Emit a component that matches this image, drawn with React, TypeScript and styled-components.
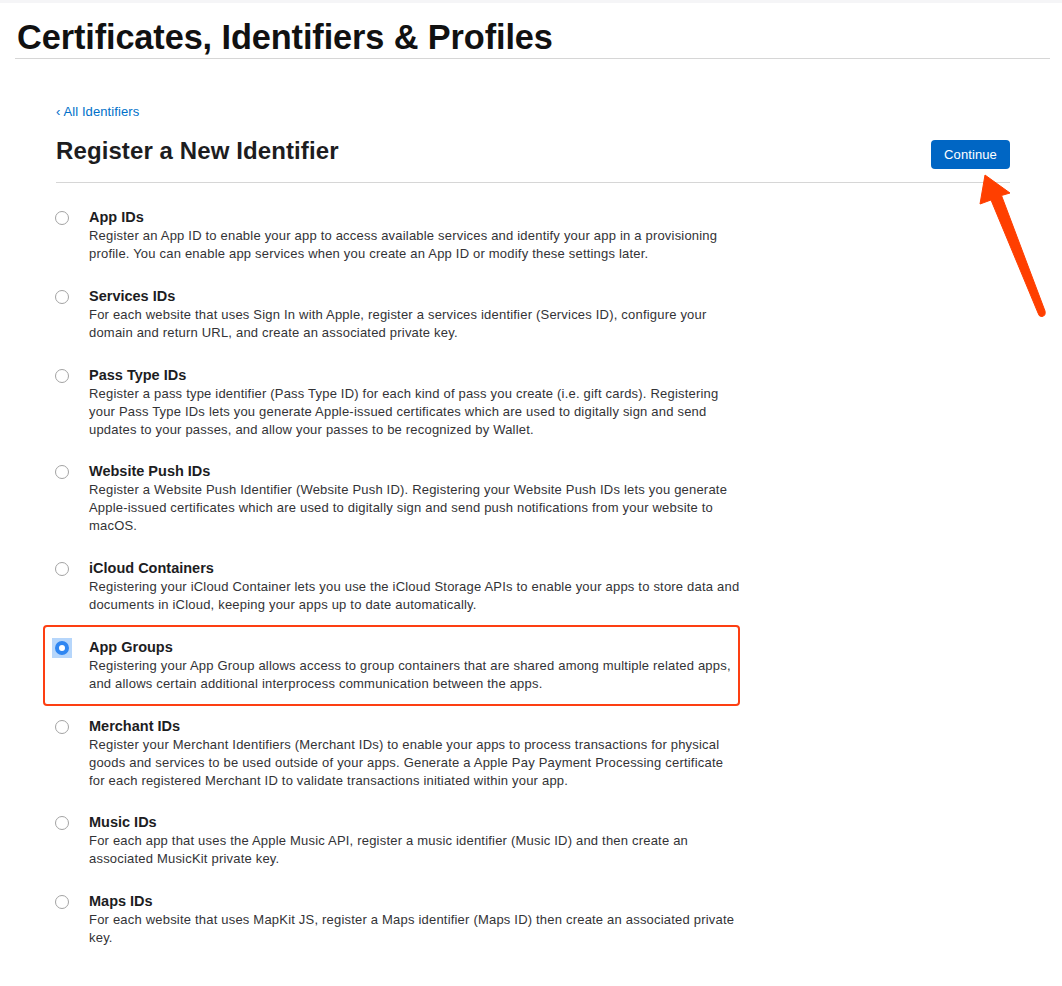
import React from "react";
import styled, { createGlobalStyle } from "styled-components";

const Global = createGlobalStyle`
  html, body { margin: 0; padding: 0; background: #fff; }
  body { font-family: "Liberation Sans", Arial, sans-serif; color: #1d1d1f; -webkit-font-smoothing: antialiased; }
`;

const Page = styled.div`
  position: relative;
  width: 1062px;
  min-height: 986px;
`;

const TopStrip = styled.div`
  height: 3px;
  background: #f5f5f7;
`;

const Header = styled.header`
  margin: 0 12px 0 15px;
  padding: 15px 0 2px 2px;
  border-bottom: 1px solid #d6d6d6;
`;

const PageTitle = styled.h1`
  margin: 0;
  font-size: 34.3px;
  line-height: 38px;
  font-weight: 700;
  letter-spacing: -0.1px;
  color: #111;
`;

const Content = styled.main`
  width: 954px;
  margin: 44px 0 0 56px;
`;

const BackLink = styled.a`
  display: block;
  font-size: 13px;
  line-height: 18px;
  color: #0070c9;
  text-decoration: none;
  letter-spacing: 0.1px;
`;

const TitleRow = styled.div`
  display: flex;
  align-items: flex-start;
  justify-content: space-between;
  margin-top: 15px;
  padding-bottom: 13px;
  border-bottom: 1px solid #d6d6d6;
`;

const SectionTitle = styled.h2`
  margin: 0;
  font-size: 24px;
  line-height: 30px;
  font-weight: 700;
  letter-spacing: 0.1px;
  color: #1d1d1f;
`;

const ContinueButton = styled.button`
  width: 79px;
  height: 29px;
  border: none;
  border-radius: 4px;
  background: #0066c4;
  color: #fff;
  font-family: inherit;
  font-size: 13px;
  letter-spacing: 0.1px;
  padding: 0;
  margin-top: 4px;
`;

const List = styled.ul`
  list-style: none;
  margin: 0;
  padding: 25px 0 0 0;
  display: flex;
  flex-direction: column;
  gap: 23.75px;
`;

const Item = styled.li<{ $highlight?: boolean }>`
  position: relative;
  display: flex;
  gap: 17px;
  &::after {
    content: "";
    display: ${(p) => (p.$highlight ? "block" : "none")};
    position: absolute;
    left: -13px;
    top: -13px;
    width: 693px;
    height: 77px;
    border: 2px solid #fd3f12;
    border-radius: 4px;
    pointer-events: none;
  }
`;

const RadioWrap = styled.span<{ $checked?: boolean }>`
  flex: none;
  width: 20px;
  height: 20px;
  margin: 0 0 0 -4px;
  display: flex;
  align-items: center;
  justify-content: center;
  background: ${(p) => (p.$checked ? "#b6d6fb" : "transparent")};
`;

const Radio = styled.span<{ $checked?: boolean }>`
  width: 14px;
  height: 14px;
  box-sizing: border-box;
  border-radius: 50%;
  border: ${(p) => (p.$checked ? "4.5px solid #2f86f1" : "1px solid #a3a3a3")};
  background: #fff;
`;

const Body = styled.div`
  display: flex;
  flex-direction: column;
`;

const ItemTitle = styled.div`
  font-size: 14.5px;
  line-height: 19px;
  font-weight: 700;
  color: #1d1d1f;
`;

const Desc = styled.div`
  font-size: 13px;
  line-height: 18px;
  letter-spacing: 0.2px;
  color: #333336;
`;

const Line = styled.span`
  display: block;
  white-space: nowrap;
`;

const Arrow = styled.svg`
  position: absolute;
  left: 0;
  top: 0;
  pointer-events: none;
`;

type Entry = { title: string; lines: string[]; checked?: boolean };

const entries: Entry[] = [
  {
    title: "App IDs",
    lines: [
      "Register an App ID to enable your app to access available services and identify your app in a provisioning",
      "profile. You can enable app services when you create an App ID or modify these settings later.",
    ],
  },
  {
    title: "Services IDs",
    lines: [
      "For each website that uses Sign In with Apple, register a services identifier (Services ID), configure your",
      "domain and return URL, and create an associated private key.",
    ],
  },
  {
    title: "Pass Type IDs",
    lines: [
      "Register a pass type identifier (Pass Type ID) for each kind of pass you create (i.e. gift cards). Registering",
      "your Pass Type IDs lets you generate Apple-issued certificates which are used to digitally sign and send",
      "updates to your passes, and allow your passes to be recognized by Wallet.",
    ],
  },
  {
    title: "Website Push IDs",
    lines: [
      "Register a Website Push Identifier (Website Push ID). Registering your Website Push IDs lets you generate",
      "Apple-issued certificates which are used to digitally sign and send push notifications from your website to",
      "macOS.",
    ],
  },
  {
    title: "iCloud Containers",
    lines: [
      "Registering your iCloud Container lets you use the iCloud Storage APIs to enable your apps to store data and",
      "documents in iCloud, keeping your apps up to date automatically.",
    ],
  },
  {
    title: "App Groups",
    checked: true,
    lines: [
      "Registering your App Group allows access to group containers that are shared among multiple related apps,",
      "and allows certain additional interprocess communication between the apps.",
    ],
  },
  {
    title: "Merchant IDs",
    lines: [
      "Register your Merchant Identifiers (Merchant IDs) to enable your apps to process transactions for physical",
      "goods and services to be used outside of your apps. Generate a Apple Pay Payment Processing certificate",
      "for each registered Merchant ID to validate transactions initiated within your app.",
    ],
  },
  {
    title: "Music IDs",
    lines: [
      "For each app that uses the Apple Music API, register a music identifier (Music ID) and then create an",
      "associated MusicKit private key.",
    ],
  },
  {
    title: "Maps IDs",
    lines: [
      "For each website that uses MapKit JS, register a Maps identifier (Maps ID) then create an associated private",
      "key.",
    ],
  },
];

export default function App() {
  return (
    <Page>
      <Global />
      <TopStrip />
      <Header>
        <PageTitle>Certificates, Identifiers &amp; Profiles</PageTitle>
      </Header>
      <Content>
        <BackLink href="#">‹ All Identifiers</BackLink>
        <TitleRow>
          <SectionTitle>Register a New Identifier</SectionTitle>
          <ContinueButton>Continue</ContinueButton>
        </TitleRow>
        <List>
          {entries.map((e) => (
            <Item key={e.title} $highlight={e.checked}>
              <RadioWrap $checked={e.checked}>
                <Radio $checked={e.checked} />
              </RadioWrap>
              <Body>
                <ItemTitle>{e.title}</ItemTitle>
                <Desc>
                  {e.lines.map((l, i) => (
                    <Line key={i}>{l}</Line>
                  ))}
                </Desc>
              </Body>
            </Item>
          ))}
        </List>
      </Content>
      <Arrow width="1062" height="986" viewBox="0 0 1062 986">
        <path
          d="M985 175 L1010 193 L1001.5 195.5 L1045 311 Q1046 316 1042 316.5 Q1039 317 1038 313 L991 200 L980 204 Z"
          fill="#ff3f00"
          stroke="#ff3f00"
          strokeWidth="1"
          strokeLinejoin="round"
        />
      </Arrow>
    </Page>
  );
}
